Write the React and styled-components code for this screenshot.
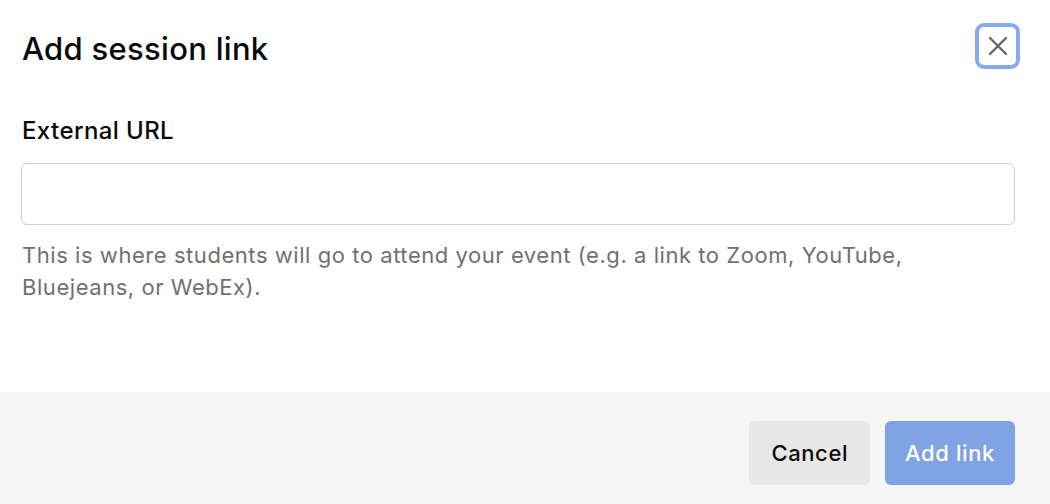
import React from 'react';
import styled, { createGlobalStyle } from 'styled-components';

const GlobalStyle = createGlobalStyle`
  html, body {
    margin: 0;
    padding: 0;
    background: #ffffff;
    font-family: Inter, "Liberation Sans", sans-serif;
    color: #111111;
  }
  * { box-sizing: border-box; }
`;

const Dialog = styled.div`
  width: 1050px;
  height: 504px;
  display: flex;
  flex-direction: column;
  background: #fff;
`;

const Body = styled.div`
  height: 392px;
  padding: 23px 30px 0 21px;
`;

const Header = styled.div`
  display: flex;
  align-items: flex-start;
  justify-content: space-between;
`;

const Title = styled.h2`
  margin: 7px 0 0 1px;
  font-size: 31px;
  line-height: 1.21;
  font-weight: 500;
  letter-spacing: 0.3px;
  color: #0a0a0a;
`;

const CloseButton = styled.button`
  width: 45px;
  height: 46px;
  display: flex;
  align-items: center;
  justify-content: center;
  padding: 0;
  background: #fff;
  border: 4px solid #86a9ef;
  border-radius: 9px;
  color: #666;
  cursor: pointer;
`;

const Label = styled.label`
  display: block;
  margin: 47px 0 0 1px;
  font-size: 24px;
  line-height: 1.21;
  font-weight: 500;
  letter-spacing: 0.4px;
  color: #0a0a0a;
`;

const Input = styled.input`
  display: block;
  width: 994px;
  height: 62px;
  margin-top: 18px;
  border: 1px solid #cfcfcf;
  border-radius: 6px;
  font-family: inherit;
  font-size: 20px;
  padding: 0 16px;
  outline: none;
`;

const Help = styled.p`
  margin: 14px 0 0 1px;
  font-size: 22px;
  line-height: 32px;
  letter-spacing: 0.55px;
  color: #707070;
  max-width: 960px;
`;

const Footer = styled.div`
  flex: 1;
  background: #f5f5f5;
  display: flex;
  align-items: flex-start;
  justify-content: flex-end;
  gap: 15px;
  padding: 29px 35px 0 0;
`;

const Button = styled.button`
  height: 64px;
  padding: 0 ${p => (p.$primary ? '20px' : '22px')};
  border: none;
  border-radius: 6px;
  font-family: inherit;
  font-size: 22px;
  font-weight: 500;
  letter-spacing: 0.6px;
  cursor: pointer;
  background: ${p => (p.$primary ? '#80a3e3' : '#e7e7e7')};
  color: ${p => (p.$primary ? '#ffffff' : '#0a0a0a')};
`;

export default function App() {
  return (
    <>
      <GlobalStyle />
      <Dialog>
        <Body>
          <Header>
            <Title>Add session link</Title>
            <CloseButton aria-label="Close">
              <svg width="22" height="22" viewBox="0 0 22 22" fill="none" stroke="currentColor" strokeWidth="2.4" strokeLinecap="round">
                <path d="M3 3L19 19M19 3L3 19" />
              </svg>
            </CloseButton>
          </Header>
          <Label htmlFor="url">External URL</Label>
          <Input id="url" type="text" />
          <Help>
            This is where students will go to attend your event (e.g. a link to Zoom, YouTube,
            Bluejeans, or WebEx).
          </Help>
        </Body>
        <Footer>
          <Button>Cancel</Button>
          <Button $primary>Add link</Button>
        </Footer>
      </Dialog>
    </>
  );
}
